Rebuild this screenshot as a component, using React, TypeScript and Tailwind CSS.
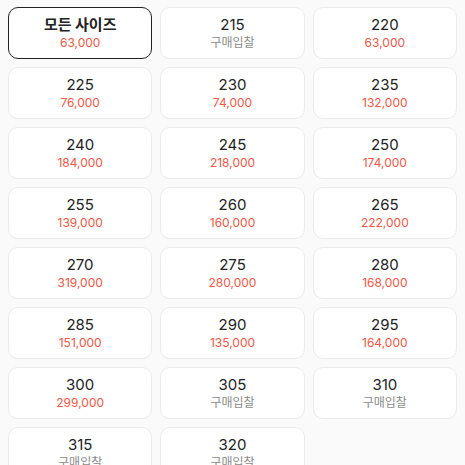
const sizes: { label: string; price?: string }[] = [
  { label: "모든 사이즈", price: "63,000" },
  { label: "215" },
  { label: "220", price: "63,000" },
  { label: "225", price: "76,000" },
  { label: "230", price: "74,000" },
  { label: "235", price: "132,000" },
  { label: "240", price: "184,000" },
  { label: "245", price: "218,000" },
  { label: "250", price: "174,000" },
  { label: "255", price: "139,000" },
  { label: "260", price: "160,000" },
  { label: "265", price: "222,000" },
  { label: "270", price: "319,000" },
  { label: "275", price: "280,000" },
  { label: "280", price: "168,000" },
  { label: "285", price: "151,000" },
  { label: "290", price: "135,000" },
  { label: "295", price: "164,000" },
  { label: "300", price: "299,000" },
  { label: "305" },
  { label: "310" },
  { label: "315" },
  { label: "320" },
]

export default function App() {
  return (
    <div
      className="h-[465px] w-[465px] overflow-hidden bg-[#fafafa] px-2 pt-[7px]"
      style={{ fontFamily: '"Inter", "Noto Sans CJK KR", sans-serif' }}
    >
      <div className="grid grid-cols-3 gap-2">
        {sizes.map((s, i) => {
          const selected = i === 0
          return (
            <button
              key={s.label}
              className={
                selected
                  ? "flex h-[52px] flex-col items-center justify-center rounded-[10px] border border-[#222] bg-white"
                  : "flex h-[52px] flex-col items-center justify-center rounded-[10px] border border-[#ebebeb] bg-white"
              }
            >
              <span
                className={
                  selected
                    ? "text-[15px] leading-[19px] font-bold text-[#222]"
                    : "text-[15px] leading-[19px] text-[#222]"
                }
              >
                {s.label}
              </span>
              {s.price ? (
                <span className="text-[12px] leading-[17px] text-[#f15746]">{s.price}</span>
              ) : (
                <span className="text-[12px] leading-[17px] text-[#8b8b8b]">구매입찰</span>
              )}
            </button>
          )
        })}
      </div>
    </div>
  )
}
